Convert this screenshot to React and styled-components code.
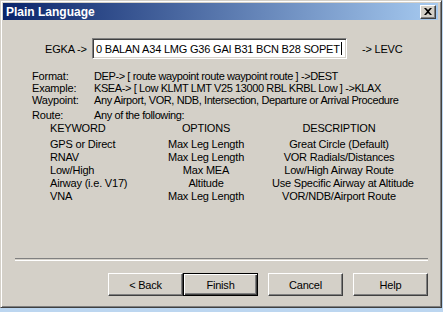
import React from "react";
import styled, { createGlobalStyle } from "styled-components";

const Global = createGlobalStyle`
  html, body { margin: 0; padding: 0; background: #bcd6f0; }
  body {
    font-family: "Liberation Sans", Arial, sans-serif;
    font-size: 11px;
    color: #000;
  }
`;

const Desktop = styled.div`
  width: 443px;
  height: 312px;
  overflow: hidden;
`;

const Window = styled.div`
  width: 442px;
  height: 308px;
  box-sizing: border-box;
  background: #d4d0c8;
  border: 1px solid;
  border-color: #d4d0c8 #404040 #404040 #d4d0c8;
  box-shadow: inset 1px 1px 0 #fff, inset -1px -1px 0 #808080;
  padding: 2px 3px 3px 2px;
  display: flex;
  flex-direction: column;
`;

const TitleBar = styled.div`
  height: 17px;
  flex: none;
  display: flex;
  align-items: center;
  justify-content: space-between;
  padding: 0 2px 0 3px;
  background: linear-gradient(to right, #0a246a, #a6caf0);
`;

const TitleText = styled.span`
  font-family: "Liberation Sans", Arial, sans-serif;
  font-weight: bold;
  font-size: 12px;
  color: #fff;
`;

const CloseButton = styled.div`
  width: 16px;
  height: 14px;
  box-sizing: border-box;
  background: #d4d0c8;
  border: 1px solid;
  border-color: #fff #404040 #404040 #fff;
  box-shadow: inset -1px -1px 0 #808080;
  display: flex;
  align-items: center;
  justify-content: center;
`;

const Client = styled.div`
  flex: 1;
  display: flex;
  flex-direction: column;
  padding: 0 0 8px 0;
  letter-spacing: -0.2px;
`;

const RouteRow = styled.div`
  display: flex;
  align-items: center;
  margin-top: 18px;
  padding-left: 42px;
  height: 21px;
`;

const RowLabel = styled.span`
  width: ${(p) => p.$w}px;
  margin-left: ${(p) => p.$ml || 0}px;
  flex: none;
  white-space: nowrap;
`;

const RouteInput = styled.div`
  width: 255px;
  height: 21px;
  box-sizing: border-box;
  flex: none;
  background: #fff;
  border: 1px solid;
  border-color: #808080 #fff #fff #808080;
  box-shadow: inset 1px 1px 0 #404040, inset -1px -1px 0 #d4d0c8;
  padding-left: 3px;
  display: flex;
  align-items: center;
  white-space: nowrap;
  overflow: hidden;
`;

const Caret = styled.span`
  display: inline-block;
  width: 1px;
  height: 13px;
  background: #000;
  margin-left: 1px;
`;

const InfoGrid = styled.div`
  display: grid;
  grid-template-columns: 62px 1fr;
  margin: ${(p) => p.$mt}px 0 0 29px;
  line-height: ${(p) => p.$lh}px;
  white-space: nowrap;
`;

const InfoValue = styled.span`
  letter-spacing: -0.4px;
`;

const Table = styled.div`
  display: grid;
  grid-template-columns: 90px 132px 134px;
  margin-left: 47px;
  line-height: 13px;
  white-space: nowrap;
`;

const Cell = styled.div`
  text-align: ${(p) => (p.$center ? "center" : "left")};
  padding-bottom: ${(p) => (p.$head ? 3 : 0)}px;
`;

const Separator = styled.div`
  margin: auto 10px 0 12px;
  height: 1px;
  border-top: 1px solid #808080;
  border-bottom: 1px solid #fff;
`;

const ButtonRow = styled.div`
  display: flex;
  justify-content: flex-end;
  margin-top: 12px;
  padding-right: 10px;
`;

const Button = styled.div`
  width: 75px;
  height: 23px;
  box-sizing: border-box;
  margin-left: ${(p) => p.$gap || 0}px;
  background: #d4d0c8;
  display: flex;
  align-items: center;
  justify-content: center;
  border: 1px solid;
  border-color: ${(p) => (p.$default ? "#000" : "#fff #404040 #404040 #fff")};
  box-shadow: ${(p) =>
    p.$default
      ? "inset 1px 1px 0 #fff, inset -1px -1px 0 #404040, inset -2px -2px 0 #808080"
      : "inset -1px -1px 0 #808080"};
`;

const rows = [
  ["GPS or Direct", "Max Leg Length", "Great Circle (Default)"],
  ["RNAV", "Max Leg Length", "VOR Radials/Distances"],
  ["Low/High", "Max MEA", "Low/High Airway Route"],
  ["Airway (i.e. V17)", "Altitude", "Use Specific Airway at Altitude"],
  ["VNA", "Max Leg Length", "VOR/NDB/Airport Route"],
];

export default function App() {
  return (
    <Desktop>
      <Global />
      <Window>
        <TitleBar>
          <TitleText>Plain Language</TitleText>
          <CloseButton>
            <svg width="8" height="7" viewBox="0 0 8 7">
              <path d="M0 0h2l2 2 2-2h2L5 3.5 8 7H6L4 5 2 7H0l3-3.5z" fill="#000" />
            </svg>
          </CloseButton>
        </TitleBar>
        <Client>
          <RouteRow>
            <RowLabel $w={47}>EGKA -&gt;</RowLabel>
            <RouteInput>
              0 BALAN A34 LMG G36 GAI B31 BCN B28 SOPET<Caret />
            </RouteInput>
            <RowLabel $w={60} $ml={15}>-&gt; LEVC</RowLabel>
          </RouteRow>
          <InfoGrid $mt={11} $lh={12}>
            <span>Format:</span>
            <InfoValue>DEP-&gt; [ route waypoint route waypoint route ] -&gt;DEST</InfoValue>
            <span>Example:</span>
            <InfoValue>KSEA-&gt; [ Low KLMT LMT V25 13000 RBL KRBL Low ] -&gt;KLAX</InfoValue>
            <span>Waypoint:</span>
            <InfoValue>Any Airport, VOR, NDB, Intersection, Departure or Arrival Procedure</InfoValue>
          </InfoGrid>
          <InfoGrid $mt={3} $lh={13}>
            <span>Route:</span>
            <InfoValue>Any of the following:</InfoValue>
          </InfoGrid>
          <Table>
            <Cell $head>KEYWORD</Cell>
            <Cell $head $center>OPTIONS</Cell>
            <Cell $head $center>DESCRIPTION</Cell>
            {rows.map((r) => (
              <React.Fragment key={r[0]}>
                <Cell>{r[0]}</Cell>
                <Cell $center>{r[1]}</Cell>
                <Cell $center>{r[2]}</Cell>
              </React.Fragment>
            ))}
          </Table>
          <Separator />
          <ButtonRow>
            <Button>&lt; Back</Button>
            <Button $default>Finish</Button>
            <Button $gap={10}>Cancel</Button>
            <Button $gap={10}>Help</Button>
          </ButtonRow>
        </Client>
      </Window>
    </Desktop>
  );
}
